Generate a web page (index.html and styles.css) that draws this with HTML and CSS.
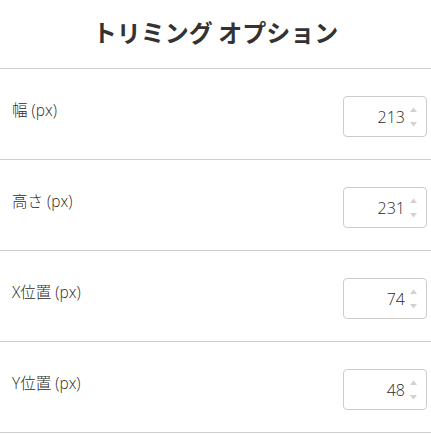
FILE: index.html
```html
<!DOCTYPE html>
<html lang="ja">
<head>
    <meta charset="UTF-8">
    <meta name="viewport" content="width=device-width, initial-scale=1.0">
    <title>トリミング オプション</title>
    <link rel="stylesheet" href="styles.css">
</head>
<body>
    <div id="crop-panel">
        <div class="panel-header">
            <h2>トリミング オプション</h2>
        </div>

        <!-- Crop fields -->
        <div class="field-row">
            <label for="crop-width">幅 (px)</label>
            <div class="number-box">
                <input type="number" id="crop-width" value="213">
                <svg class="spinner" width="9" height="22" viewBox="0 0 9 22">
                    <path d="M1 6 L4.5 1.5 L8 6 Z" />
                    <path d="M1 16 L4.5 20.5 L8 16 Z" />
                </svg>
            </div>
        </div>

        <div class="field-row">
            <label for="crop-height">高さ (px)</label>
            <div class="number-box">
                <input type="number" id="crop-height" value="231">
                <svg class="spinner" width="9" height="22" viewBox="0 0 9 22">
                    <path d="M1 6 L4.5 1.5 L8 6 Z" />
                    <path d="M1 16 L4.5 20.5 L8 16 Z" />
                </svg>
            </div>
        </div>

        <div class="field-row">
            <label for="crop-x">X位置 (px)</label>
            <div class="number-box">
                <input type="number" id="crop-x" value="74">
                <svg class="spinner" width="9" height="22" viewBox="0 0 9 22">
                    <path d="M1 6 L4.5 1.5 L8 6 Z" />
                    <path d="M1 16 L4.5 20.5 L8 16 Z" />
                </svg>
            </div>
        </div>

        <div class="field-row">
            <label for="crop-y">Y位置 (px)</label>
            <div class="number-box">
                <input type="number" id="crop-y" value="48">
                <svg class="spinner" width="9" height="22" viewBox="0 0 9 22">
                    <path d="M1 6 L4.5 1.5 L8 6 Z" />
                    <path d="M1 16 L4.5 20.5 L8 16 Z" />
                </svg>
            </div>
        </div>
    </div>
</body>
</html>
```

FILE: styles.css
```css
/* Global Styling */
body {
    margin: 0;
    font-family: 'Noto Sans CJK JP', sans-serif;
    background: #fff;
    color: #333;
}

.panel-header {
    height: 68px;
    border-bottom: 1px solid #cfcfcf;
}

.panel-header h2 {
    margin: 0;
    line-height: 63px;
    font-size: 24px;
    font-weight: bold;
    text-align: center;
    color: #333;
}

/* Field rows */
.field-row {
    display: flex;
    justify-content: space-between;
    align-items: flex-start;
    height: 91px;
    padding: 27px 4px 0 12px;
    box-sizing: border-box;
    border-bottom: 1px solid #cfcfcf;
}

.field-row label {
    font-family: 'Open Sans', 'Noto Sans CJK JP', sans-serif;
    font-size: 15.5px;
    font-weight: 300;
    line-height: 29px;
    color: #2a2a2a;
}

.number-box {
    display: flex;
    align-items: center;
    width: 84px;
    height: 41px;
    box-sizing: border-box;
    border: 1px solid #ccc;
    border-radius: 4px;
    padding: 0 8px 0 6px;
}

.number-box input {
    width: 100%;
    min-width: 0;
    border: none;
    outline: none;
    padding: 0 4px 0 0;
    text-align: right;
    font-family: 'Open Sans', sans-serif;
    font-size: 16px;
    font-weight: 300;
    color: #2a2a2a;
    background: transparent;
    -moz-appearance: textfield;
}

.number-box input::-webkit-inner-spin-button,
.number-box input::-webkit-outer-spin-button {
    -webkit-appearance: none;
    margin: 0;
}

.spinner {
    flex-shrink: 0;
    fill: #d2d2d2;
}
```
